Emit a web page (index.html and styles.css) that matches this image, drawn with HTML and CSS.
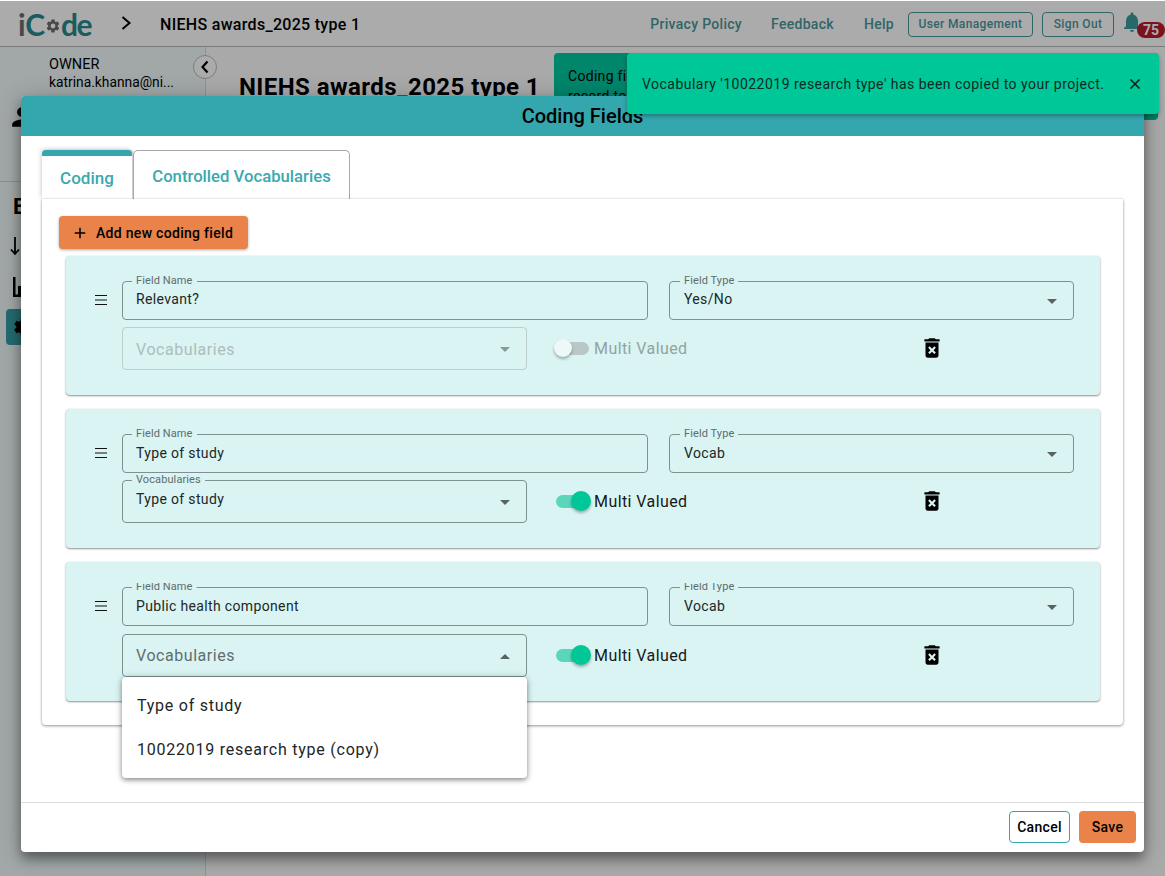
FILE: index.html
```html
<!DOCTYPE html>
<html lang="en">
<head>
<meta charset="utf-8">
<title>iCode</title>
<link rel="stylesheet" href="styles.css">
</head>
<body>
<div class="app">
  <header class="topbar">
    <div class="logo"><span class="logo-i">i</span><span>C</span><svg class="logo-gear" viewBox="0 0 24 24"><path d="M19.14 12.94c.04-.3.06-.61.06-.94s-.02-.64-.07-.94l2.03-1.58a.49.49 0 0 0 .12-.61l-1.92-3.32a.49.49 0 0 0-.59-.22l-2.39.96c-.5-.38-1.03-.7-1.62-.94l-.36-2.54a.48.48 0 0 0-.48-.41h-3.84a.48.48 0 0 0-.47.41l-.36 2.54c-.59.24-1.13.57-1.62.94l-2.39-.96a.48.48 0 0 0-.59.22L2.69 8.87a.47.47 0 0 0 .12.61l2.03 1.58c-.05.3-.09.63-.09.94s.02.64.07.94l-2.03 1.58a.49.49 0 0 0-.12.61l1.92 3.32c.12.22.37.29.59.22l2.39-.96c.5.38 1.03.7 1.62.94l.36 2.54c.05.24.24.41.48.41h3.84c.24 0 .44-.17.47-.41l.36-2.54c.59-.24 1.13-.56 1.62-.94l2.39.96c.22.08.47 0 .59-.22l1.92-3.32a.47.47 0 0 0-.12-.61l-2.01-1.58zM12 15.6A3.6 3.6 0 1 1 12 8.4a3.6 3.6 0 0 1 0 7.2z"/></svg><span>de</span></div>
    <svg class="crumb-chevron" viewBox="0 0 12 16"><path d="M2.5 2l7 6-7 6"/></svg>
    <div class="crumb-title">NIEHS awards_2025 type 1</div>
    <nav class="nav">
      <a class="nav-link nav-privacy">Privacy Policy</a>
      <a class="nav-link nav-feedback">Feedback</a>
      <a class="nav-link nav-help">Help</a>
      <button class="nav-btn nav-users">User Management</button>
      <button class="nav-btn nav-signout">Sign Out</button>
      <div class="bell-wrap">
        <svg class="bell" viewBox="0 0 24 24"><path d="M12 22c1.1 0 2-.9 2-2h-4c0 1.1.9 2 2 2zm6-6v-5c0-3.07-1.63-5.64-4.5-6.32V4c0-.83-.67-1.5-1.5-1.5s-1.5.67-1.5 1.5v.68C7.64 5.36 6 7.92 6 11v5l-2 2v1h16v-1l-2-2z"/></svg>
        <span class="badge">75</span>
      </div>
    </nav>
  </header>
  <div class="below">
    <aside class="sidebar">
      <div class="owner">
        <div>OWNER</div>
        <div>katrina.khanna@ni...</div>
      </div>
      <button class="collapse"><svg viewBox="0 0 12 16"><path d="M8.5 2.5l-5 5.5 5 5.5"/></svg></button>
      <svg class="side-user" viewBox="0 0 24 24"><path d="M12 12c2.7 0 4.9-2.2 4.9-4.9S14.700 2.200 12 2.200 7.100 4.400 7.100 7.100 9.300 12 12 12zm0 2.400c-3.300 0-9.800 1.600-9.800 4.900v2.500h19.600v-2.500c0-3.300-6.500-4.900-9.800-4.900z"/></svg>
      <div class="side-rule"></div>
      <div class="side-item side-e">E</div>
      <svg class="side-arrow" viewBox="0 0 12 20"><path d="M6 1v17M2 13.500L6 18l4-4.500"/></svg>
      <svg class="side-chart" viewBox="0 0 24 22"><path d="M0 0h2.500v17.500H24V20H0z"/><path d="M5 9h4v9H5zM11 12h4v6h-4z"/></svg>
      <div class="side-active"><svg class="side-active-gear" viewBox="0 0 24 24"><path d="M19.14 12.94c.04-.3.06-.61.06-.94s-.02-.64-.07-.94l2.03-1.58a.49.49 0 0 0 .12-.61l-1.92-3.32a.49.49 0 0 0-.59-.22l-2.39.96c-.5-.38-1.03-.7-1.62-.94l-.36-2.54a.48.48 0 0 0-.48-.41h-3.84a.48.48 0 0 0-.47.41l-.36 2.54c-.59.24-1.13.57-1.62.94l-2.39-.96a.48.48 0 0 0-.59.22L2.69 8.87a.47.47 0 0 0 .12.61l2.03 1.58c-.05.3-.09.63-.09.94s.02.64.07.94l-2.03 1.58a.49.49 0 0 0-.12.61l1.92 3.32c.12.22.37.29.59.22l2.39-.96c.5.38 1.03.7 1.62.94l.36 2.54c.05.24.24.41.48.41h3.84c.24 0 .44-.17.47-.41l.36-2.54c.59-.24 1.13-.56 1.62-.94l2.39.96c.22.08.47 0 .59-.22l1.92-3.32a.47.47 0 0 0-.12-.61l-2.01-1.58z"/></svg></div>
    </aside>
    <main class="main">
      <h1 class="page-title">NIEHS awards_2025 type 1</h1>
      <div class="info-box">Coding fields are used to classify each<br>record to help you</div>
    </main>
  </div>
</div>

<div class="backdrop"></div>

<section class="modal">
  <div class="modal-head">Coding Fields</div>
  <div class="modal-body">
    <div class="tabs">
      <div class="tab tab-active">Coding</div>
      <div class="tab tab-idle">Controlled Vocabularies</div>
    </div>
    <div class="panel">
      <button class="add-btn"><svg viewBox="0 0 24 24"><path d="M19 13h-6v6h-2v-6H5v-2h6V5h2v6h6v2z"/></svg>Add new coding field</button>
      <div class="card-list">

        <article class="card">
          <svg class="handle" viewBox="0 0 12 10"><path d="M0 .5h12M0 5h12M0 9.500h12"/></svg>
          <div class="card-rows">
            <div class="row">
              <div class="field field-name"><span class="field-label">Field Name</span><span class="field-value">Relevant?</span></div>
              <div class="field field-type"><span class="field-label">Field Type</span><span class="field-value">Yes/No</span><i class="caret"></i></div>
            </div>
            <div class="row row-second">
              <div class="field field-vocab field-disabled"><span class="field-big">Vocabularies</span><i class="caret"></i></div>
              <span class="switch switch-off"><i></i></span>
              <span class="switch-text switch-text-off">Multi Valued</span>
              <svg class="trash" viewBox="0 0 24 24"><path d="M6 19c0 1.100.9 2 2 2h8c1.100 0 2-.9 2-2V7H6v12zm2.460-7.120 1.410-1.410L12 12.590l2.120-2.120 1.410 1.410L13.410 14l2.120 2.120-1.410 1.410L12 15.410l-2.120 2.120-1.410-1.410L10.590 14l-2.130-2.120zM15.500 4l-1-1h-5l-1 1H5v2h14V4z"/></svg>
            </div>
          </div>
        </article>

        <article class="card">
          <svg class="handle" viewBox="0 0 12 10"><path d="M0 .5h12M0 5h12M0 9.500h12"/></svg>
          <div class="card-rows">
            <div class="row">
              <div class="field field-name"><span class="field-label">Field Name</span><span class="field-value">Type of study</span></div>
              <div class="field field-type"><span class="field-label">Field Type</span><span class="field-value">Vocab</span><i class="caret"></i></div>
            </div>
            <div class="row row-second">
              <div class="field field-vocab field-filled"><span class="field-label">Vocabularies</span><span class="field-value">Type of study</span><i class="caret"></i></div>
              <span class="switch"><i></i></span>
              <span class="switch-text">Multi Valued</span>
              <svg class="trash" viewBox="0 0 24 24"><path d="M6 19c0 1.100.9 2 2 2h8c1.100 0 2-.9 2-2V7H6v12zm2.460-7.120 1.410-1.410L12 12.590l2.120-2.120 1.410 1.410L13.410 14l2.120 2.120-1.410 1.410L12 15.410l-2.120 2.120-1.410-1.410L10.590 14l-2.130-2.120zM15.500 4l-1-1h-5l-1 1H5v2h14V4z"/></svg>
            </div>
          </div>
        </article>

        <article class="card card-open">
          <svg class="handle" viewBox="0 0 12 10"><path d="M0 .5h12M0 5h12M0 9.500h12"/></svg>
          <div class="card-rows">
            <div class="row">
              <div class="field field-name"><span class="field-label field-label-clipped">Field Name</span><span class="field-value">Public health component</span></div>
              <div class="field field-type"><span class="field-label field-label-clipped">Field Type</span><span class="field-value">Vocab</span><i class="caret"></i></div>
            </div>
            <div class="row row-second">
              <div class="field field-vocab field-open"><span class="field-big">Vocabularies</span><i class="caret caret-up"></i>
                <ul class="menu">
                  <li>Type of study</li>
                  <li>10022019 research type (copy)</li>
                </ul>
              </div>
              <span class="switch"><i></i></span>
              <span class="switch-text">Multi Valued</span>
              <svg class="trash" viewBox="0 0 24 24"><path d="M6 19c0 1.100.9 2 2 2h8c1.100 0 2-.9 2-2V7H6v12zm2.460-7.120 1.410-1.410L12 12.590l2.120-2.120 1.410 1.410L13.410 14l2.120 2.120-1.410 1.410L12 15.410l-2.120 2.120-1.410-1.410L10.590 14l-2.130-2.120zM15.500 4l-1-1h-5l-1 1H5v2h14V4z"/></svg>
            </div>
          </div>
        </article>

      </div>
    </div>
  </div>
  <footer class="modal-foot">
    <button class="foot-btn foot-cancel">Cancel</button>
    <button class="foot-btn foot-save">Save</button>
  </footer>
</section>

<div class="snackbar">
  <span>Vocabulary '10022019 research type' has been copied to your project.</span>
  <svg class="snack-close" viewBox="0 0 12 12"><path d="M1.500 1.500l9 9M10.500 1.500l-9 9"/></svg>
</div>
</body>
</html>
```

FILE: styles.css
```css
* { box-sizing: border-box; }
html, body { margin: 0; height: 100%; }
body {
  width: 1165px;
  height: 876px;
  overflow: hidden;
  position: relative;
  font-family: Roboto, "Liberation Sans", sans-serif;
  color: #000;
  background: #fff;
}
button { font-family: inherit; cursor: pointer; }

/* page beneath the dialog */
.app { height: 876px; display: flex; flex-direction: column; }
.topbar {
  height: 47px;
  flex: none;
  display: flex;
  align-items: center;
  padding: 2px 0 0 18px;
  background: #fff;
  border-bottom: 1px solid #b8b8b8;
  box-shadow: 0 1px 2px rgba(0,0,0,.2);
}
.logo {
  display: flex;
  align-items: center;
  width: 73px;
  margin-top: -1px;
  font-family: Lato, sans-serif;
  font-size: 30px;
  font-weight: 700;
  line-height: 1;
  letter-spacing: -1.300px;
  color: #2a8a90;
}
.logo-i { color: #6c6c6c; margin-right: 1px; }
.logo-gear { width: 16px; height: 16px; margin: 4px 0 0 1px; fill: #6c6c6c; flex: none; }
.crumb-chevron { width: 12px; height: 16px; margin: -2px 0 0 29px; fill: none; stroke: #000; stroke-width: 2; }
.crumb-title { margin-left: 28px; font-size: 16px; font-weight: 500; letter-spacing: .3px; }
.nav { margin-left: auto; display: flex; align-items: center; }
.nav-link { font-size: 14px; font-weight: 500; letter-spacing: .3px; color: #4b979c; }
.nav-feedback { margin-left: 29px; }
.nav-help { margin-left: 30px; }
.nav-btn {
  height: 25px;
  padding: 0;
  font-size: 12px;
  font-weight: 500;
  letter-spacing: .35px;
  color: #4b979c;
  background: #fff;
  border: 1px solid #4b979c;
  border-radius: 4px;
}
.nav-users { width: 125px; margin-left: 14px; }
.nav-signout { width: 72px; margin-left: 9px; }
.bell-wrap { position: relative; width: 51px; height: 36px; }
.bell { position: absolute; left: 6px; top: 4px; width: 24px; height: 24px; fill: #3c9a9e; }
.badge {
  position: absolute;
  left: 23px;
  top: 16px;
  width: 28px;
  height: 16px;
  border-radius: 8px;
  background: #b91c2e;
  color: #fff;
  font-size: 14px;
  font-weight: 700;
  line-height: 16px;
  text-align: center;
}
.below { flex: 1; display: flex; min-height: 0; }
.sidebar {
  position: relative;
  z-index: 1;
  width: 206px;
  flex: none;
  background: #f2fbfb;
  border-right: 1px solid #d4dcdc;
}
.owner { padding: 10px 0 0 49px; font-size: 13.800px; line-height: 18px; }
.owner div:first-child { font-size: 14.500px; line-height: 16px; }
.collapse {
  position: absolute;
  left: 193px;
  top: 8px;
  width: 24px;
  height: 24px;
  padding: 0;
  display: flex;
  align-items: center;
  justify-content: center;
  background: #fff;
  border: 1px solid #bbb;
  border-radius: 50%;
}
.collapse svg { width: 12px; height: 16px; fill: none; stroke: #000; stroke-width: 2.200; }
.side-user { position: absolute; left: 10px; top: 58px; width: 24px; height: 24px; }
.side-rule { position: absolute; left: 0; right: 0; top: 134px; height: 1px; background: #cfd6d6; }
.side-item { position: absolute; left: 13px; font-size: 22px; font-weight: 700; line-height: 20px; }
.side-e { top: 150px; }
.side-arrow { position: absolute; left: 9px; top: 189px; width: 12px; height: 20px; fill: none; stroke: #000; stroke-width: 1.800; }
.side-chart { position: absolute; left: 13px; top: 230px; width: 24px; height: 22px; }
.side-active {
  position: absolute;
  left: 6px;
  top: 262px;
  width: 40px;
  height: 36px;
  background: #36a1a8;
  border-radius: 4px;
}
.side-active-gear { position: absolute; left: 6px; top: 7px; width: 22px; height: 22px; }
.main { flex: 1; position: relative; background: #fdfdfd; }
.page-title {
  position: absolute;
  left: 33px;
  top: 25px;
  margin: 0;
  font-size: 24px;
  font-weight: 700;
  line-height: 30px;
  letter-spacing: .42px;
}
.info-box {
  position: absolute;
  left: 348px;
  top: 6px;
  width: 604px;
  height: 67px;
  padding: 13px 14px;
  background: #00c8a0;
  border-radius: 4px;
  font-size: 14px;
  line-height: 20px;
  letter-spacing: .3px;
}

/* dim layer */
.backdrop {
  position: absolute;
  z-index: 2;
  inset: 1px 0 0 0;
  background: rgba(0,0,0,.33);
}

/* dialog */
.modal {
  position: absolute;
  z-index: 3;
  left: 21px;
  top: 96px;
  width: 1123px;
  height: 756px;
  display: flex;
  flex-direction: column;
  background: #fff;
  border-radius: 4px;
  box-shadow: 0 7px 12px rgba(0,0,0,.38), 0 2px 24px rgba(0,0,0,.2);
}
.modal-head {
  height: 40px;
  flex: none;
  background: #33a6ae;
  border-radius: 4px 4px 0 0;
  font-size: 20px;
  font-weight: 500;
  line-height: 40px;
  text-align: center;
}
.modal-body { flex: 1; padding: 14px 21px 0; min-height: 0; }
.tabs { display: flex; align-items: flex-end; height: 49px; }
.tab { font-weight: 500; color: #3aa9b0; background: #fff; }
.tab-active {
  width: 90px;
  height: 49px;
  padding-top: 10px;
  font-size: 17px;
  line-height: 24px;
  text-align: center;
  border-top: 6px solid #33a6ae;
  border-radius: 4px 4px 0 0;
  box-shadow: -1px -1px 4px rgba(0,0,0,.18), 2px 0 2px rgba(0,0,0,.15);
}
.tab-idle {
  width: 217px;
  height: 49px;
  margin-left: 1px;
  padding-top: 14px;
  font-size: 16.700px;
  line-height: 24px;
  text-align: center;
  border: 1px solid #a8a8a8;
  border-bottom: 0;
  border-radius: 5px 5px 0 0;
}
.panel {
  position: relative;
  height: 526px;
  padding: 17px 23px 0 17px;
  background: #fff;
  border-radius: 0 0 4px 4px;
  box-shadow: 0 1px 3px rgba(0,0,0,.4), 0 0 2px rgba(0,0,0,.12);
}
.add-btn {
  width: 189px;
  height: 33px;
  padding: 0 0 0 14px;
  display: flex;
  align-items: center;
  gap: 9px;
  background: #e9834a;
  border: 0;
  border-radius: 4px;
  box-shadow: 0 1px 3px rgba(0,0,0,.35);
  font-size: 14px;
  font-weight: 500;
  letter-spacing: .3px;
  color: #000;
}
.add-btn svg { width: 14px; height: 14px; transform: scale(1.300); flex: none; }
.card-list {
  margin: 7px 0 0 7px;
  display: flex;
  flex-direction: column;
  gap: 14px;
}
.card {
  height: 139px;
  display: flex;
  padding-top: 25px;
  background: #d9f4f3;
  border-radius: 4px;
  box-shadow: 0 1px 2px rgba(0,0,0,.42), 0 0 2px rgba(0,0,0,.1);
}
.handle {
  width: 12px;
  height: 10px;
  margin: 14px 15px 0 29px;
  flex: none;
  fill: none;
  stroke: #111;
  stroke-width: 1.100;
}
.card-rows { flex: 1; display: flex; flex-direction: column; gap: 7px; }
.card-open .card-rows { gap: 8px; }
.row { display: flex; gap: 21px; align-items: center; }
.row-second { gap: 0; }
.field {
  position: relative;
  height: 39px;
  padding: 0 0 2px 13px;
  display: flex;
  align-items: center;
  border: 1px solid #7c9190;
  border-radius: 4px;
  flex: none;
}
.card:first-child .row:first-child .field { padding-bottom: 3px; }
.field-name { width: 526px; }
.field-type { width: 405px; padding-left: 14px; }
.field-type .field-label { left: 10px; }
.field-vocab { width: 405px; height: 43px; padding-bottom: 0; }
.field-filled { padding-bottom: 5px; }
.field-disabled { border-color: #bccfcd; padding-top: 1px; }
.field-disabled .field-big { color: #adbdbb; }
.field-disabled .caret { border-top-color: #8a9a99; }
.field-label {
  position: absolute;
  left: 9px;
  top: -8px;
  padding: 0 4px;
  background: linear-gradient(to bottom, transparent 7px, #d9f4f3 7px);
  font-size: 11px;
  line-height: 13px;
  letter-spacing: .1px;
  color: #606c6c;
}
.field-label-clipped { clip-path: inset(3px 0 0 0); }
.field-value { font-size: 14px; letter-spacing: .35px; color: #212626; }
.field-big { font-size: 16px; letter-spacing: .55px; color: #5f6e6d; }
.caret {
  position: absolute;
  right: 16px;
  top: 50%;
  margin-top: -2px;
  width: 0;
  height: 0;
  border-left: 5px solid transparent;
  border-right: 5px solid transparent;
  border-top: 5px solid #5a6363;
}
.caret-up { border-top: 0; border-bottom: 5px solid #5a6363; }
.switch {
  position: relative;
  width: 34px;
  height: 13px;
  margin-left: 29px;
  flex: none;
  background: #5cd6bb;
  border-radius: 7px;
}
.switch i {
  position: absolute;
  right: -1px;
  top: -4px;
  width: 20px;
  height: 20px;
  border-radius: 50%;
  background: #00c798;
  box-shadow: 0 2px 3px rgba(0,0,0,.3);
}
.switch-off { background: #b9c8c6; width: 33px; }
.switch-off i { left: -2px; right: auto; width: 18px; height: 18px; top: -3px; background: #edf9f8; }
.switch-text { margin-left: 4px; width: 333px; font-size: 16px; letter-spacing: .42px; color: #16191a; }
.switch-text-off { color: #92a3a1; margin-left: 5px; }
.trash { width: 26px; height: 26px; margin: -2px 0 0 -8px; flex: none; }
.menu {
  position: absolute;
  left: -1px;
  top: 42px;
  z-index: 3;
  width: 405px;
  height: 101px;
  margin: 0;
  padding: 7px 0 0;
  list-style: none;
  background: #fff;
  border-radius: 4px;
  box-shadow: 0 2px 5px rgba(0,0,0,.4), 0 0 8px rgba(0,0,0,.14);
}
.menu li {
  height: 44px;
  padding-left: 15px;
  font-size: 16px;
  line-height: 44px;
  letter-spacing: .76px;
  color: #212626;
}
.modal-foot {
  height: 50px;
  flex: none;
  display: flex;
  justify-content: flex-end;
  align-items: flex-start;
  gap: 9px;
  padding: 8px 8px 0 0;
  border-top: 1px solid #dcdcdc;
}
.foot-btn {
  height: 32px;
  padding: 0;
  font-size: 14px;
  font-weight: 500;
  letter-spacing: .3px;
  color: #000;
  border-radius: 4px;
}
.foot-cancel { width: 61px; background: #fff; border: 1px solid #33a6ae; }
.foot-save { width: 57px; background: #e9834a; border: 0; }

/* toast */
.snackbar {
  position: absolute;
  z-index: 4;
  left: 627px;
  top: 53px;
  width: 532px;
  height: 61px;
  display: flex;
  align-items: center;
  padding: 0 18px 0 15px;
  background: #00c798;
  border-radius: 4px;
  box-shadow: 0 2px 4px rgba(0,0,0,.3);
  font-size: 14px;
  letter-spacing: .475px;
  color: #0d2a24;
}
.snack-close { margin-left: auto; width: 12px; height: 12px; fill: none; stroke: #0b1f1b; stroke-width: 1.600; }
```
